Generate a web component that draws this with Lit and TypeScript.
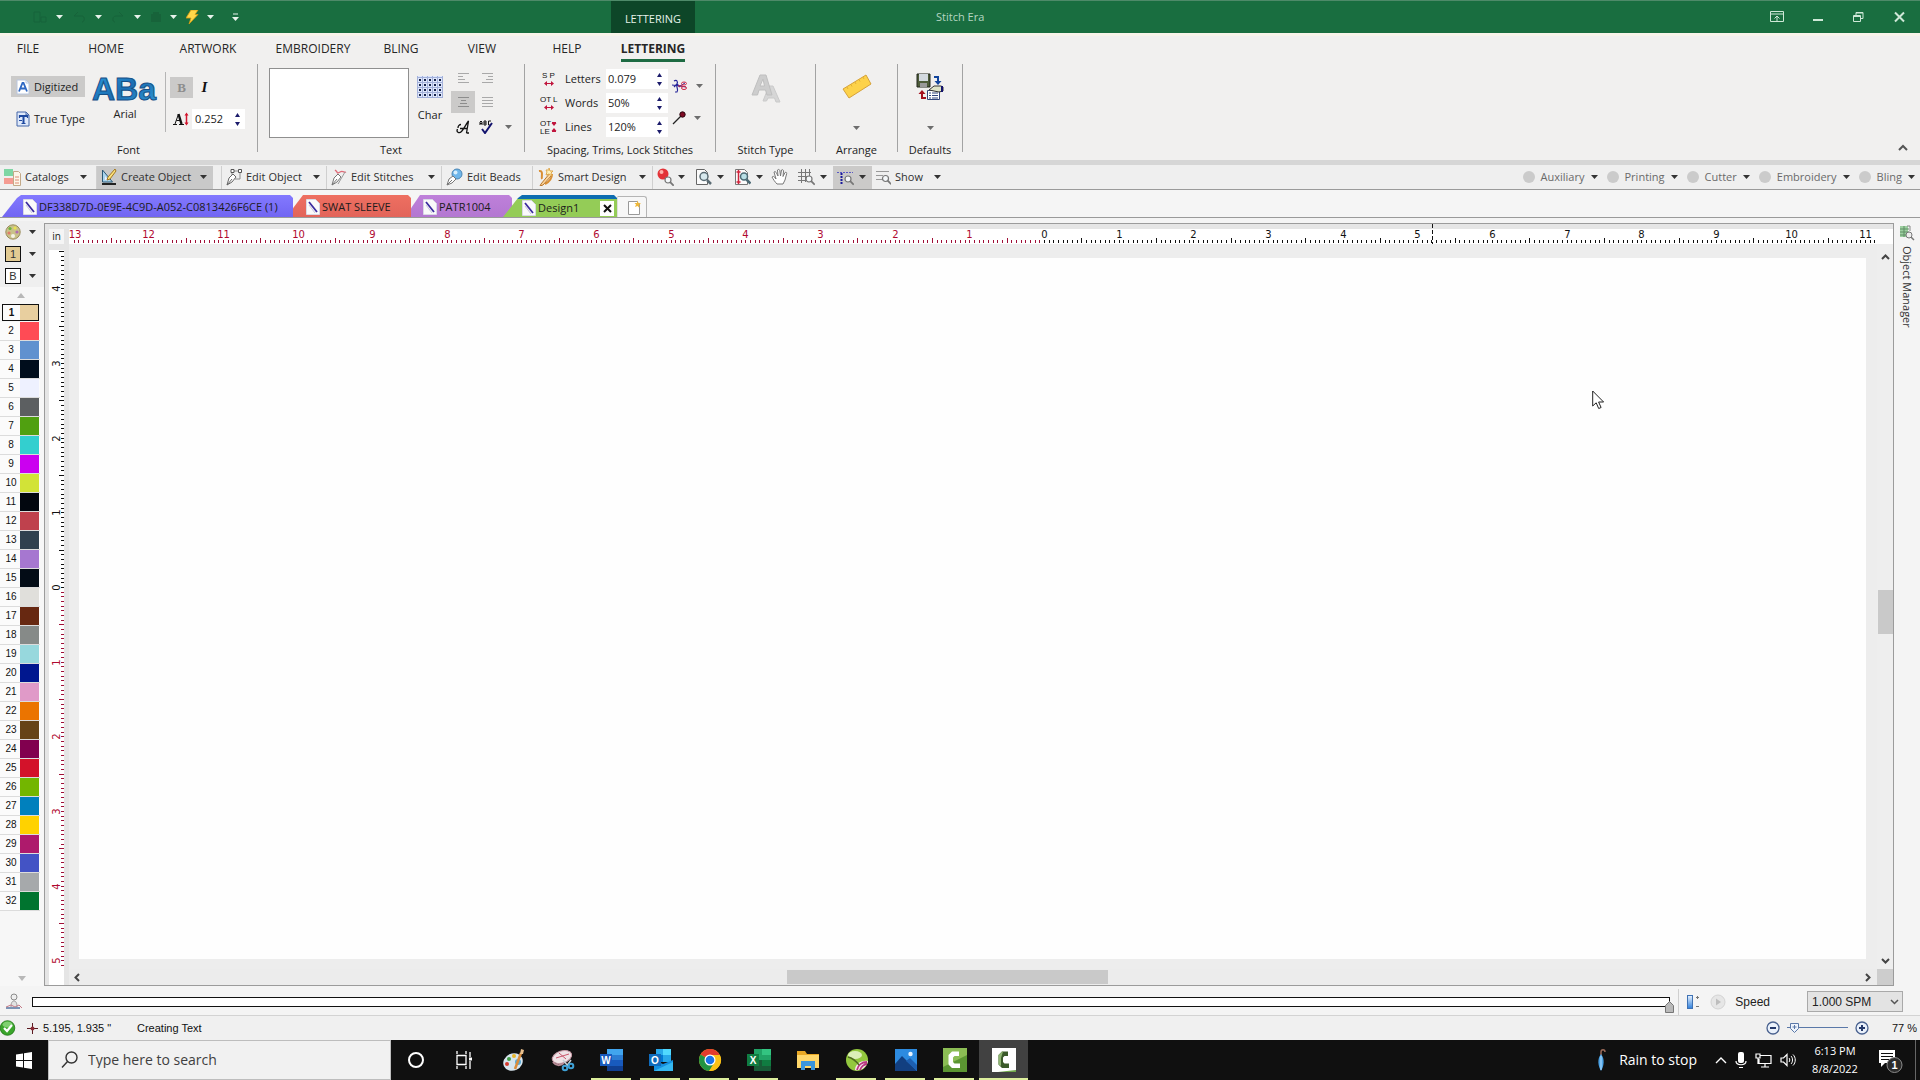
import { LitElement, html, svg, css, nothing } from "lit";
import { customElement } from "lit/decorators.js";
import { classMap } from "lit/directives/class-map.js";

const threads = [
  "#e8cf9f", "#ff4b55", "#6091cf", "#000d1c", "#eef1ff", "#5c5f61", "#50a010", "#33cfcf",
  "#cb00f0", "#d2e337", "#02070f", "#bf414d", "#2f404e", "#a677d0", "#030c16", "#e0dfdb",
  "#672811", "#868a88", "#97d8dd", "#00178f", "#e09ac8", "#eb7400", "#664316", "#81004f",
  "#d3122a", "#73b600", "#0080bd", "#ffd200", "#ae1a6c", "#4353c5", "#a6a9ab", "#00742f",
];

const ribbonTabs = ["File", "Home", "Artwork", "Embroidery", "Bling", "View", "Help", "Lettering"];

const INCH = 74.65;

const caret = (cls = "") => html`<svg class="caret ${cls}" width="7" height="4" viewBox="0 0 7 4" aria-hidden="true"><path d="M0 0h7L3.500 4z" fill="currentColor" /></svg>`;

const icon = (w: number, h: number, body: unknown) =>
  html`<svg class="icon" width=${w} height=${h} viewBox="0 0 ${w} ${h}" fill="none" aria-hidden="true">${body}</svg>`;

const lens = (x: number, y: number, c = "#777") =>
  svg`<circle cx=${x} cy=${y} r="3" stroke=${c} stroke-width="1.2" fill="#f5f8fa"/><path d="M${x + 2.2} ${y + 2.2}l3.500 3.500" stroke=${c} stroke-width="1.8"/>`;

const icons = {
  digitized: icon(14, 16, svg`<path d="M1 1h9l3 3v11H1z" fill="#fff" stroke="#b9c6de"/><path d="M10 1v3h3" stroke="#b9c6de"/><path d="M3 12.500L6.500 4h1L11 12.500M4.500 9.500h5" stroke="#2d67c4" stroke-width="1.800"/>`),
  trueType: icon(14, 16, svg`<path d="M1 1h9l3 3v11H1z" fill="#dfe9fa" stroke="#4467a8"/><path d="M10 1v3h3" stroke="#4467a8"/><path d="M4 5h7M7.500 5v7" stroke="#1f4aa0" stroke-width="2"/><path d="M3.500 4v3M11.500 4v3M5.500 12.500h4M3 9.500h3" stroke="#1f4aa0" stroke-width="1.200"/>`),
  height: icon(16, 14, svg`<path d="M0 12.500h4M6 12.500h5" stroke="#111" stroke-width="1.200"/><path d="M2 12L5.500 2M3.500 8.500h4" stroke="#111"/><path d="M5.500 2l3 10" stroke="#111" stroke-width="2.400"/><path d="M13.500 2v10" stroke="#d2142d" stroke-width="1.500"/><path d="M11.500 3.500l2-3 2 3zM11.500 10.500l2 3 2-3z" fill="#d2142d"/>`),
  grid: icon(26, 22, svg`<rect width="26" height="22" fill="#dfe7fb"/><path d="M0 1.500h26M0 6.500h26M0 11.500h26M0 16.500h26M0 21.500h26M.5 0v22M5.500 0v22M10.500 0v22M15.500 0v22M20.500 0v22M25.500 0v22" stroke="#a3b1da"/><path d="M2 4h2M7 4h2M12 4h2M17 4h2M22 4h2M2 9h2M7 9h2M12 9h2M17 9h2M22 9h2M2 14h2M7 14h2M12 14h2M17 14h2M22 14h2M2 19h2M7 19h2M12 19h2M17 19h2M22 19h2" stroke="#17234a" stroke-width="2"/>`),
  left: icon(13, 12, svg`<path d="M1 1.500h11M1 4.500h5M1 7.500h7M1 10.500h11" stroke="#a9a9a9"/>`),
  right: icon(13, 12, svg`<path d="M1 1.500h11M7 4.500h5M5 7.500h7M1 10.500h11" stroke="#a9a9a9"/>`),
  center: icon(13, 12, svg`<path d="M1 1.500h11M4 4.500h5M3 7.500h7M1 10.500h11" stroke="#8d8d8d"/>`),
  justify: icon(13, 12, svg`<path d="M1 1.500h11M1 4.500h11M1 7.500h11M1 10.500h11" stroke="#a9a9a9"/>`),
  script: icon(14, 14, svg`<path d="M1.500 9c-1.500 3 1.500 5 4 2.500C8 9 9.500 5 12.500 1L10.500 13M4 8.500h7M2 8c0-2 1.500-3.500 3-3.500M10.500 13h2.500" stroke="#111" stroke-width="1.300"/>`),
  spell: icon(16, 14, svg`<path d="M1 5V2l1-1 1 1v3M1 3.500h2M5 5V1h2v4H5M5 3h2M12 1H9.500v4H12" stroke="#111"/><path d="M3 9l3 4L13 3" stroke="#14146e" stroke-width="2"/>`),
  scissors: icon(16, 14, svg`<path d="M2 2c3-2 4 1 3 3L2 8M5 6c-1 3 2 4 0 7l-2 0M5 5l3 3" stroke="#26269a" stroke-width="1.200"/><path d="M0 6l8 1 5-3M8 7l6 1" stroke="#26269a"/><ellipse cx="12" cy="4.500" rx="2.500" ry="1.500" stroke="#cf2445"/><ellipse cx="12" cy="9" rx="2.500" ry="1.500" stroke="#cf2445"/><path d="M6 7h5" stroke="#cf2445"/>`),
  pin: icon(14, 14, svg`<path d="M1 13L9 5" stroke="#222" stroke-width="1.200"/><circle cx="10.500" cy="3.500" r="2.700" fill="#7e0a22" stroke="#2b0610"/>`),
  stitchType: icon(30, 30, svg`<path d="M12 28l6-15h4l7 16h-4l-1.500-4H17l-1.500 3z" fill="#d6d6d6" stroke="#cacaca"/><path d="M1 22L9 2h6l6 20h-5l-1.500-5H8l-1.500 5zM9 13h4.500L12 6z" fill="#cdcdcd" stroke="#bfbfbf"/>`),
  arrange: icon(32, 28, svg`<path d="M2 16L25 2l5 9L8 25z" fill="#fdd24a" stroke="#d6a23a"/><path d="M6 14l1 2M10 11.500l1 2M14 9l1 2M18 6.500l1 2M22 4l1 2" stroke="#e3b037"/>`),
  defaults: icon(28, 28, svg`<path d="M1 1h13v13H1z" fill="#4e5c3a" stroke="#23271c"/><path d="M3 1h9v7H3z" fill="#d3d9df"/><path d="M4 10h7v4H4z" fill="#999"/><path d="M18 4h4v5" stroke="#12459c" stroke-width="2"/><path d="M18.500 8h7L22 12z" fill="#12459c"/><path d="M10 25H6v-5" stroke="#a5101f" stroke-width="2"/><path d="M2.500 21h7L6 17z" fill="#a5101f"/><path d="M11.500 17.500h12v9h-12z" fill="#fff" stroke="#32467b"/><path d="M13 20h2M16 20h6M13 22.500h2M16 22.500h6M13 25h2M16 25h6" stroke="#32467b"/><path d="M13 17l5-4h7l2 1v4l-4 1z" fill="#dfe4c8" stroke="#333"/><path d="M26 13v6" stroke="#14146e" stroke-width="2"/>`),
  catalogs: icon(17, 18, svg`<path d="M0 1h9v7H0z" fill="#7fd6a4"/><path d="M0 10h9v6H0z" fill="#f49b92"/><path d="M9.500 3.500h5l2 2v12h-7z" fill="#fdf6ea" stroke="#c3a988"/><path d="M11 9h4M11 12h4M11 15h4" stroke="#dc8c74"/>`),
  create: icon(16, 18, svg`<path d="M1 16h14" stroke="#222" stroke-width="2"/><path d="M1.500 2v12h10z" fill="#a9d3ec" stroke="#2b5876"/><path d="M4 8v4h3z" fill="#eef"/><path d="M14 1L7 9l-1 3 3-1 6-8z" fill="#fbe27c" stroke="#a2761d"/>`),
  editObject: icon(16, 18, svg`<path d="M6 3h8v8h-5M6 3v5" stroke="#8d8d8d"/><path d="M5 1.500h3v3H5zM12.500 1.500h3v3h-3z" fill="#fff" stroke="#555"/><path d="M1 17l2-7 4-4 3 3-4 5z" fill="#fff" stroke="#666"/><path d="M1 17l5-6" stroke="#666"/>`),
  editStitches: icon(16, 18, svg`<path d="M4 2c4 3 1 4 5 2 3-2 4 1 6 0" stroke="#de6b78" stroke-width="1.300"/><path d="M1 17l2-7 4-4 3 3-4 5z" fill="#fff" stroke="#777"/><path d="M1 17l5-6" stroke="#777"/><path d="M14 4L7 16" stroke="#999"/>`),
  beads: icon(17, 18, svg`<circle cx="11" cy="6" r="5" fill="#6fb6ea" stroke="#4985b4"/><circle cx="9.500" cy="4.500" r="2" fill="#d7eefc"/><path d="M1 17l2-6 4-3 3 3-4 4z" fill="#fff" stroke="#777"/><path d="M1 17l5-5" stroke="#777"/>`),
  smart: icon(17, 18, svg`<path d="M2 3c5-1 2 6 3 8M15 6c0 4-3 8-7 10" stroke="#d98f35" stroke-width="2"/><path d="M4 16L13 5l2 2L6 17l-3 1z" fill="#fbd59a" stroke="#b9762d"/><path d="M12 0l1 3 3 0-2 2 1 3-3-2-3 1 1-3-1-2h3z" fill="#fff0b8" stroke="#e0a84c"/>`),
  ball: icon(17, 18, svg`<circle cx="6" cy="6" r="5.500" fill="#e33338"/><circle cx="4.500" cy="4" r="2" fill="#ffb1ab"/>${lens(11, 12)}`),
  docLens: icon(17, 18, svg`<path d="M1.500 1.500h8l3 3v12h-11z" fill="#fbfbfb" stroke="#666"/><circle cx="9" cy="8.500" r="4" fill="#d7e9ee" stroke="#5a6b73" stroke-width="1.500"/><path d="M12 12l4 4" stroke="#5a6b73" stroke-width="2.500"/>`),
  docRed: icon(17, 18, svg`<path d="M1.500 1.500h9l3 3v12h-12z" fill="#fbfbfb" stroke="#777"/><path d="M4.500 2v14M2.500 4h4M2.500 14h4" stroke="#d0243c" stroke-width="1.500"/><circle cx="10" cy="8.500" r="3.500" fill="#b9dfe6" stroke="#4c6a75" stroke-width="1.500"/><path d="M12.500 11.500l4 4" stroke="#4c6a75" stroke-width="2.500"/>`),
  hand: icon(18, 18, svg`<path d="M6 16c-2-2-4-5-5-7 1-1 2-1 4 2L3 4c1-1 2 0 2.500 1L7 8 6.500 2c1-1 2-.5 2.300.5L9.500 8l1-6c1-.8 2 0 2 1L12 8.500l2-4c1-.5 2 0 1.700 1L14 12l-2 4z" fill="#fff" stroke="#777"/>`),
  gridLens: icon(17, 18, svg`<path d="M0 4.500h13M0 8.500h11M0 12.500h8M3.500 1v14M7.500 1v13M11.500 1v8" stroke="#777"/>${lens(11, 11)}`),
  guide: icon(17, 18, svg`<path d="M0 4.500h16" stroke="#5a5ac4" stroke-dasharray="2 1"/><path d="M4.500 5v12" stroke="#1b1b9c" stroke-width="2" stroke-dasharray="2 1"/>${lens(11, 11)}`),
  show: icon(15, 18, svg`<path d="M0 3.500h13M0 7.500h7M0 11.500h6" stroke="#999"/>${lens(9.5, 10.5)}`),
  pen: icon(14, 16, svg`<path d="M.5.5h9l4 4v11H.5z" fill="#fafafa" stroke="#d9d9e5"/><path d="M3 3l8 10" stroke="#3a2a9e" stroke-width="1.800"/><path d="M3 6l6 8" stroke="#c8c5de"/>`),
  newTab: icon(14, 15, svg`<path d="M.5 1.500h9v2h2v11H.5z" fill="#fff" stroke="#999"/><path d="M9.500.5l1 2.500 2.500.5-2 1.500.5 3-2-2-2.500 1L8 4.500 6.500 3H9z" fill="#f0b93a"/>`),
  palette: icon(16, 16, svg`<circle cx="8" cy="8" r="7.200" fill="#c9c28a" stroke="#9a8b5c"/><circle cx="5" cy="4.500" r="1.600" fill="#6cb33e"/><circle cx="10" cy="4" r="1.600" fill="#e9e04f"/><circle cx="12" cy="8" r="1.600" fill="#b06bb2"/><circle cx="4" cy="9" r="1.600" fill="#e07b6a"/><circle cx="8" cy="12" r="2" fill="#f5f3e6"/>`),
  manager: icon(16, 16, svg`<path d="M1 1h8v11H1z" fill="#9dcfa0"/><path d="M1 4h9M1 7h9M1 10h7M5 1v11" stroke="#5f8f64"/><path d="M8 1h3v5" stroke="#888"/><circle cx="10" cy="10" r="3" stroke="#777" fill="#eee"/><path d="M12 12l3 3" stroke="#777" stroke-width="1.500"/>`),
  bolt: icon(13, 14, svg`<path d="M5 0h7L9 4.500h3L3 14l2-6H0z" fill="#ffd84a" stroke="#d89a12" stroke-width=".8"/>`),
  sim: icon(17, 17, svg`<circle cx="9" cy="4" r="3" fill="#eee" stroke="#8b8b8b"/><path d="M6 14c0-4 1-6 3-6s3 2 3 6" fill="#e3e3e3" stroke="#999"/><path d="M1 15h14" stroke="#7b93b5" stroke-width="2"/><path d="M1 14l5-2 4 2 4-2 3 3" stroke="#c47a86"/>`),
};

const taskIcons: { name: string; art: unknown; open?: boolean; active?: boolean }[] = [
  { name: "Cortana", art: svg`<circle cx="12" cy="12" r="7" stroke="#fff" stroke-width="2"/>` },
  { name: "Task View", art: svg`<path d="M4 7.500h9v9H4zM4 3v3M13 3v3M4 18v3M13 18v3" stroke="#fff" stroke-width="1.300"/><path d="M17 4v5M17 13v8" stroke="#fff" stroke-width="1.300"/><path d="M16 9.500h3v3h-3z" fill="#fff"/>` },
  { name: "Paint", art: svg`<ellipse cx="11" cy="14" rx="10" ry="8.500" transform="rotate(-25 11 14)" fill="#d7e5ee"/><circle cx="5" cy="16" r="2" fill="#d43b2f"/><circle cx="7" cy="11" r="2" fill="#3f9b45"/><circle cx="12" cy="8" r="2" fill="#e8b62c"/><circle cx="16" cy="14" r="3" fill="#58a9d7"/><path d="M13 21L19 5" stroke="#d98c3b" stroke-width="2.500"/><path d="M18 6l1-5 3 1-1 4z" fill="#e9c08d"/>` },
  { name: "Snipping Tool", art: svg`<ellipse cx="11" cy="9" rx="10" ry="6" transform="rotate(-18 11 9)" fill="#efe3e6" stroke="#c79aa6"/><path d="M5 10l13-4M8 5l7 6" stroke="#c9566b"/><path d="M2 14c3 4 7 4 11 1" stroke="#b98d98" stroke-width="2"/><path d="M12 12l5 6M20 12l-5 7" stroke="#c5cdd3" stroke-width="1.500"/><circle cx="14" cy="20" r="2.300" stroke="#3fa1d6" stroke-width="2"/><circle cx="20" cy="18" r="2.300" stroke="#3fa1d6" stroke-width="2"/>` },
  { name: "Word", open: true, art: svg`<path d="M7 1h16v22H7z" fill="#2b7cd3"/><path d="M7 1h16v6H7z" fill="#41a5ee"/><path d="M7 12h16v6H7z" fill="#185abd"/><path d="M7 18h16v5H7z" fill="#103f91"/><path d="M0 6h12v12H0z" fill="#185abd"/><text x="6" y="15.500" font-size="10" class="glyph">W</text>` },
  { name: "Outlook", open: true, art: svg`<path d="M7 1h15v13H7z" fill="#28a8ea"/><path d="M14 1h8v6h-8z" fill="#50d9ff"/><path d="M7 7h7v7H7z" fill="#0078d4"/><path d="M5 12l9 4 10-4v11H5z" fill="#1490df"/><path d="M5 23l19-9v9z" fill="#35b8f1"/><path d="M0 6h12v12H0z" fill="#0f6cbd"/><text x="6" y="15.500" font-size="10" class="glyph">O</text>` },
  { name: "Chrome", open: true, art: svg`<circle cx="12" cy="12" r="11" fill="#fbc116"/><path d="M12 12L2.500 6.500A11 11 0 0 1 21.500 6.500z" fill="#e33b2e"/><path d="M12 12L2.500 6.500A11 11 0 0 0 11 23l6-8z" fill="#229342"/><path d="M12 7h9.800a11 11 0 0 1-10.500 16L17 13z" fill="#fbc116"/><circle cx="12" cy="12" r="5.500" fill="#fff"/><circle cx="12" cy="12" r="4.300" fill="#1a73e8"/>` },
  { name: "Excel", open: true, art: svg`<path d="M7 1h17v22H7z" fill="#21a366"/><path d="M15 1h9v6h-9z" fill="#33c481"/><path d="M7 12h8v11H7z" fill="#185c37"/><path d="M15 12h9v6h-9z" fill="#107c41"/><path d="M15 18h9v5h-9z" fill="#185c37"/><path d="M0 6h12v12H0z" fill="#107c41"/><text x="6" y="15.500" font-size="10" class="glyph">X</text>` },
  { name: "File Explorer", art: svg`<path d="M1 3h8l2 3h12v14H1z" fill="#e9a825"/><path d="M1 7h22v13H1z" fill="#ffd76a"/><path d="M5 13h14v9h-4v-4H9v4H5z" fill="#3a96dd"/>` },
  { name: "Stitch Era", open: true, art: svg`<circle cx="12" cy="12" r="11" fill="#93c83e"/><ellipse cx="10" cy="7" rx="7" ry="4" fill="#dcefb8"/><path d="M23 13a11 11 0 0 1-13 9c0-6 6-10 13-9z" fill="#f8e3ee"/><path d="M12 22c1-5 5-8 10-8M15 22c1-3 4-6 7-6" stroke="#b8367e" stroke-width="1.800"/><path d="M3 9c4 1 8 4 11 8" stroke="#4f6b1f" stroke-width="1.500"/>` },
  { name: "Photos", open: true, art: svg`<path d="M1 1h22v22H1z" fill="#2d8be0"/><path d="M1 23V16l7-8 15 15z" fill="#123f80"/><path d="M12 13l4-3 7 7v6z" fill="#1d5fb0"/><circle cx="16.500" cy="6" r="2.200" fill="#e8f4ff"/>` },
  { name: "Camtasia", open: true, art: svg`<path d="M0 0h24v24H0z" fill="#5b9632"/><path d="M0 0h24v7L0 19z" fill="#8bbd54"/><path d="M16 3.500H9L5.500 7v9.500L9 20h8v-4.500h-5.500L10 14V9.500L11.500 8H16z" fill="#fff"/>` },
  { name: "Camtasia Recorder", active: true, art: svg`<path d="M0 0h24v24H0z" fill="#fff"/><path d="M24 22v2H6z" fill="#6ea64a"/><path d="M16 3.500H10L6.500 7v9.500L10 20h7v-4.500h-4.500L11 14V9.500L12.500 8H16z" fill="#3b5a2a"/><path d="M6.500 7L10 3.500h1L9 10v8l-2.500-1.500z" fill="#8fb573"/>` },
];

@customElement("design-ruler")
export class DesignRuler extends LitElement {
  static properties = { vertical: { type: Boolean } };
  declare vertical: boolean;

  static styles = css`
    :host { display: block; overflow: hidden; background: #fff; }
    svg { display: block; width: 100%; height: 100%; overflow: hidden; }
    text { font: 10px "DejaVu Sans", "Open Sans", sans-serif; text-anchor: middle; fill: #111; }
    text.neg { fill: #b0092f; }
    .pos { stroke: #111; }
    .neg-line { stroke: #a01038; }
  `;

  render() {
    const origin = this.vertical ? 337.5 : 975.5;
    const from = this.vertical ? -79 : -208;
    const to = this.vertical ? 81 : 178;
    let pos = "";
    let neg = "";
    const labels = [];
    for (let i = from; i <= to; i++) {
      const p = Math.floor(origin + (i * INCH) / 16) + 0.5;
      const len = i % 8 === 0 && i % 16 !== 0 ? 5 : 3;
      const seg = this.vertical ? `M${15 - len} ${p}h${len}` : `M${p} ${14 - len}v${len}`;
      const negative = this.vertical ? i > 0 : i < 0;
      if (negative) neg += seg; else pos += seg;
      if (i % 16 === 0) {
        const cls = negative ? "neg" : "";
        const n = Math.abs(i / 16);
        labels.push(this.vertical
          ? svg`<text class=${cls} transform="translate(11 ${p}) rotate(-90)">${n}</text>`
          : svg`<text class=${cls} x=${Math.max(p, 6)} y="9">${n}</text>`);
      }
    }
    return html`<svg aria-hidden="true"><path class="pos" d=${pos} /><path class="neg-line" d=${neg} />${labels}</svg>`;
  }
}

@customElement("app-root")
export class AppRoot extends LitElement {
  static styles = css`
    * { box-sizing: border-box; }
    :host {
      display: flex; flex-direction: column; min-height: 100vh;
      font: 11px/16px "Open Sans", "Noto Sans", sans-serif; color: #222; background: #f3f3f3;
    }
    button, input, select { font: inherit; color: inherit; border: 0; background: none; padding: 0; margin: 0; border-radius: 0; }
    button { display: flex; align-items: center; }
    svg { display: block; flex: none; }
    .spring { flex: 1; }

    .titlebar { display: grid; grid-template-columns: 611px 84px 1fr 164px; height: 33px; background: #196e40; border-top: 1px solid #4e8a69; color: #cfe3d7; }
    .quick { display: flex; align-items: center; padding: 0 0 0 33px; gap: 9px; }
    .quick .caret { color: #e8f3ec; }
    .quick .dim { color: #17633a; }
    .quick button { gap: 8px; }
    .quick .customize { margin-left: 9px; }
    .context { display: flex; align-items: center; justify-content: center; background: #0d4628; color: #e6f2ea; padding-top: 3px; }
    .apptitle { padding: 8px 0 0 241px; color: #b5d6c2; }
    .winbtns { display: grid; grid-template-columns: repeat(4, 1fr); color: #cfe8d8; }
    .winbtns button { justify-content: center; }

    .menu { display: flex; height: 31px; padding: 5px 0 0 1px; background: #f1f0ef; border-top: 3px solid #f8f4ea; }
    .menu button { justify-content: center; align-items: flex-start; font-size: 12px; color: #262626; }
    .menu span { display: block; height: 21px; }
    .m-file { width: 54px; } .m-home, .m-artwork { width: 102px; } .m-embroidery { width: 108px; }
    .m-bling { width: 68px; } .m-view { width: 94px; } .m-help { width: 76px; } .m-lettering { width: 96px; }
    .menu .m-lettering span { font-weight: 700; border-bottom: 3px solid #1e6b43; }

    .ribbon { display: flex; height: 96px; padding: 0 0 8px; background: #f1f0ef; position: relative; }
    .group { display: flex; flex-direction: column; border-right: 1px solid #a3a3a3; }
    .group > .body { flex: 1; min-height: 0; display: flex; align-items: flex-start; }
    .group > .caption { height: 16px; margin-bottom: -6px; text-align: center; white-space: nowrap; }
    .g-font { width: 258px; } .g-text { width: 267px; } .g-space { width: 191px; }
    .g-stitch { width: 100px; } .g-arrange { width: 82px; } .g-defaults { width: 65px; }
    .fontkinds { padding: 12px 0 0 11px; display: flex; flex-direction: column; gap: 11px; width: 85px; }
    .fontkinds button { height: 21px; padding: 0 4px 0 5px; gap: 4px; white-space: nowrap; }
    .on { background: #cbcac9; }
    .fontface { flex-direction: column; width: 80px; padding-top: 5px; }
    .aba { font: 700 32px "Liberation Sans", sans-serif; fill: url(#abafill); stroke: #174f86; }
    .face-name { margin-top: -3px; }
    .fontstyle { margin-top: 8px; height: 60px; padding: 5px 0 0 4px; border-left: 1px solid #b5b5b5; display: flex; flex-direction: column; gap: 11px; }
    .fontstyle > div { display: flex; }
    .stylebtn { width: 23px; height: 21px; justify-content: center; font: 700 13px "Liberation Serif", serif; color: #8d8d8d; }
    .stylebtn.ital { font-style: italic; font-size: 15px; color: #111; }
    .sizefield { align-items: center; gap: 3px; padding-left: 3px; }
    .spin { display: flex; align-items: center; background: #fff; height: 20px; }
    .spin input { width: 42px; padding-left: 3px; }
    .spin.wide input { width: 50px; padding-left: 2px; }
    .spin .arrows { display: flex; flex-direction: column; gap: 5px; width: 11px; }
    .arrows button { color: #1b1b6b; }
    .textarea { margin: 4px 0 0 11px; width: 140px; height: 70px; border: 1px solid #8f8f8f; background: #fff; resize: none; padding: 2px; font: inherit; border-radius: 0; }
    .charbtn { flex-direction: column; width: 42px; padding-top: 12px; gap: 9px; }
    .aligns { display: grid; grid-template-columns: 24px 24px 18px; grid-template-rows: 27px 22px 27px; }
    .aligns button { justify-content: center; }
    .gray { color: #6d6d6d; }
    .spacing { display: grid; grid-template-columns: 27px 41px 62px; grid-auto-rows: 20px; row-gap: 4px; align-items: center; padding: 5px 0 0 13px; }
    .spacing .glyphs { font: 8px "Liberation Sans", sans-serif; fill: #111; }
    .lock { display: flex; flex-direction: column; gap: 18px; padding: 15px 0 0 4px; }
    .lock button { gap: 8px; }
    .big { width: 100%; flex-direction: column; padding-top: 9px; gap: 25px; }
    .collapse { position: absolute; right: 12px; bottom: 8px; }

    .tools { display: flex; align-items: center; height: 30px; border-top: 5px solid #d6d6d6; border-bottom: 1px solid #9a9a9a; background: #efefef; color: #303030; }
    .tools button { height: 23px; padding: 0 6px 0 4px; gap: 4px; white-space: nowrap; }
    .tools .caret { color: #333; }
    .tools .push { margin-left: auto; }
    .tools .lbl { display: block; text-align: left; }
    .tools .sepr { border-left: 1px solid #cfcfcf; }
    .t-cat { width: 93px; } .t-create { width: 117px; margin: 0 8px 0 3px; } .t-obj { width: 105px; } .t-st { width: 115px; }
    .t-bead { width: 91px; } .t-smart { width: 120px; } .t-ico { width: 39px; } .tools .t-hand { width: 25px; padding: 0 2px; }
    .t-show { width: 75px; }
    .tools .t-create.on { background: #c9c9c9; }
    .tools .mach { color: #6a6a6a; gap: 6px; padding: 0 5px 0 4px; }
    .dot { width: 12px; height: 12px; border-radius: 6px; background: #cbcbcb; }

    .tabs { display: flex; align-items: flex-end; height: 28px; padding-left: 2px; background: #f5f5f5; border-bottom: 1px solid #9a9a9a; color: #1c1c1c; }
    .tab { height: 22px; padding-top: 2px; display: flex; align-items: center; white-space: nowrap; clip-path: polygon(0 100%, 15px 3px, 19px 0, calc(100% - 3px) 0, 100% 3px, 100% 100%); }
    .tab button { gap: 2px; }
    .t1 { width: 291px; padding-left: 21px; background: linear-gradient(#8379ff, #7165f2); }
    .t2 { width: 118px; padding-left: 13px; background: linear-gradient(#ee6f61, #e2645a); clip-path: polygon(0 60%, 10px 0, calc(100% - 3px) 0, 100% 3px, 100% 100%, 0 100%); }
    .t3 { width: 101px; padding-left: 12px; background: linear-gradient(#be80da, #b377d1); clip-path: polygon(0 60%, 9px 0, calc(100% - 3px) 0, 100% 3px, 100% 100%, 0 100%); }
    .t4 { width: 114px; padding: 4px 3px 0 19px; margin-left: -9px; background: linear-gradient(#0d6cb0 4px, #94cc57 4px); justify-content: space-between; }
    .closex { width: 14px; height: 15px; background: #fff; justify-content: center; }
    .tnew { width: 30px; height: 21px; padding-left: 5px; justify-content: center; border: 1px solid #b5b5b5; border-bottom: 0; border-left-color: #ddd; background: #f7f7f7; border-radius: 0 3px 0 0; }

    .main { flex: 1; display: grid; grid-template-columns: 44px minmax(0, 1fr) 26px; padding-top: 5px; background: #f4f4f4; }
    .side { margin-top: -2px; background: #f7f7f7; display: flex; flex-direction: column; font-family: "Liberation Sans", sans-serif; }
    .side .row { display: flex; align-items: center; height: 22px; padding-left: 5px; gap: 8px; color: #333; background: #efefef; }
    .sq { width: 16px; height: 16px; border: 1px solid #111; background: #fff; line-height: 14px; font-size: 11px; text-align: center; }
    .sq.tan { background: #e2cb93; }
    .up { display: flex; align-items: center; justify-content: center; height: 16px; padding-right: 3px; color: #b8b8b8; }
    .threads { list-style: none; margin: 0; padding: 0; width: 40px; }
    .threads button { width: 100%; height: 19px; padding: 0 1px 0 0; border-bottom: 1px solid #dcdcdc; background: #fbfbfb; font-size: 10px; color: #111; }
    .threads .num { width: 20px; padding-left: 2px; text-align: center; }
    .threads i { flex: 1; height: 18px; }
    .threads .sel { border: 1px solid #111; height: 17px; margin: 1px 0; width: 37px; margin-left: 2px; font-weight: 700; padding: 0; }
    .threads .sel .num { width: 17px; padding: 0; } .threads .sel i { height: 15px; }
    .down { margin-top: auto; padding: 0; }

    .frame { position: relative; display: grid; grid-template-columns: 4px 15px 5px minmax(0, 1fr) 16px; grid-template-rows: 5px 15px 6px minmax(0, 1fr) 16px; background: #e5e5e5; border: 1px solid #9b9b9b; }
    .corner { grid-area: 2 / 2; background: #f5f5f5; text-align: center; font: 10px/15px "Open Sans", sans-serif; }
    .hr { grid-area: 2 / 4 / 3 / 6; }
    .vr { grid-area: 4 / 2 / 6 / 3; }
    .work { grid-area: 3 / 4 / 5 / 5; background: #ededed; padding: 14px 11px 10px 10px; display: flex; }
    .paper { flex: 1; background: #fefefe; }
    .marker { position: absolute; left: 1387px; top: 0; width: 1px; height: 20px; background: repeating-linear-gradient(#111 0 4px, transparent 4px 6px); }
    .pointer { position: absolute; left: 1547px; top: 166px; }
    .vs { grid-area: 3 / 5 / 5 / 6; display: flex; flex-direction: column; align-items: center; background: #eeeeee; padding: 10px 0 5px; color: #444; }
    .hs { grid-area: 5 / 4 / 6 / 5; display: flex; align-items: center; background: #ececec; padding: 0 6px 0 5px; color: #444; }
    .thumb { background: #c9c9c9; }
    .vs .before { flex: 330; } .vs .thumb { flex: 44; width: 15px; } .vs .after { flex: 324; }
    .hs .before { flex: 705; } .hs .thumb { flex: 321; height: 14px; } .hs .after { flex: 755; }
    .grip { grid-area: 5 / 5; background: #cdcdcd; }
    .manager { display: flex; flex-direction: column; align-items: center; padding-top: 2px; gap: 5px; color: #333; }
    .manager span { writing-mode: vertical-rl; }

    .simbar { display: flex; align-items: center; height: 30px; padding: 2px 17px 0 5px; background: #f4f4f4; border-bottom: 1px solid #d3d3d3; font: 12px/16px "Liberation Sans", sans-serif; }
    .progress { flex: 1; display: flex; align-items: center; margin: 0 8px 0 10px; position: relative; }
    .progress .bar { flex: 1; height: 10px; border: 1px solid #111; background: #fff; }
    .progress .handle { position: absolute; right: -4px; top: 4px; }
    .simbar .ctl { display: flex; align-items: center; gap: 9px; border-left: 1px solid #cfcfcf; height: 26px; padding-left: 8px; }
    .speed { width: 96px; height: 21px; padding: 0 4px; background: #e3e3e3; border: 1px solid #a9a9a9; appearance: none; }
    .selwrap { position: relative; margin-left: 28px; display: flex; }
    .selwrap svg { position: absolute; right: 4px; top: 8px; pointer-events: none; }

    .status { display: flex; align-items: center; height: 24px; padding: 0 3px 0 0; background: #f0f0f0; font: 11px/16px "Liberation Sans", sans-serif; color: #111; }
    .status .coords { margin-left: 5px; width: 94px; }
    .status .cross { margin-left: 11px; }
    .zoom { display: flex; align-items: center; gap: 7px; margin-right: 23px; }
    .track { width: 61px; height: 12px; display: flex; }

    .taskbar { display: flex; align-items: stretch; height: 40px; background: #101010; color: #fff; }
    .taskbar .start { width: 48px; justify-content: center; }
    .search { display: flex; align-items: center; gap: 10px; width: 343px; padding-left: 12px; background: #f1f1f1; border: 1px solid #bdbdbd; }
    .search input { font-size: 14px; flex: 1; color: #333; outline: 0; }
    .search input::placeholder { color: #3f3f3f; opacity: 1; }
    .apps { display: flex; }
    .apps button { width: 49px; justify-content: center; position: relative; }
    .apps .open::after, .apps .active::after { content: ""; position: absolute; bottom: 0; left: 4px; right: 5px; height: 2px; background: #dcee9c; }
    .apps .active { background: #414141; }
    .apps .active::after { left: 0; right: 0; }
    .glyph { font-family: "Liberation Sans", sans-serif; font-weight: 700; fill: #fff; text-anchor: middle; }
    .tray { display: flex; align-items: center; margin-left: auto; gap: 8px; padding-right: 4px; }
    .weather { gap: 13px; margin-right: 10px; font-size: 14px; }
    .clock { width: 62px; flex-direction: column; line-height: 18px; justify-content: center; }
    .notes { margin: 0 3px 0 4px; }
    .edge { width: 1px; height: 40px; background: #666; }
  `;

  private tool(cls: string, art: unknown, label = "", drop = true) {
    return html`<button class=${cls} aria-label=${label || "View tool"}>${art}${label ? html`<span class="lbl">${label}</span>` : nothing}${drop ? html`<span class="push">${caret()}</span>` : nothing}</button>`;
  }

  private spin(id: string, value: string, wide = false) {
    return html`<div class=${classMap({ spin: true, wide })}>
      <input id=${id} .value=${value} aria-label=${id} />
      <div class="arrows">
        <button aria-label="Increase"><svg width="7" height="4" viewBox="0 0 7 4"><path d="M1 4h5L3.500 0z" fill="currentColor" /></svg></button>
        <button aria-label="Decrease"><svg width="7" height="4" viewBox="0 0 7 4"><path d="M1 0h5L3.500 4z" fill="currentColor" /></svg></button>
      </div>
    </div>`;
  }

  private titleBar() {
    return html`<header class="titlebar">
      <div class="quick">
        <button aria-label="New"><span class="dim">${icon(15, 13, svg`<path d="M1 1h6v10H1zM8 6h5v5H8z" stroke="currentColor"/>`)}</span>${caret()}</button>
        <button aria-label="Undo"><span class="dim">${icon(15, 13, svg`<path d="M2 5l4-4M2 5h8c3 0 3 6 0 6" stroke="currentColor"/>`)}</span>${caret()}</button>
        <button aria-label="Redo"><span class="dim">${icon(15, 13, svg`<path d="M12 5L8 1M12 5H5C1 5 1 11 4 11" stroke="currentColor"/>`)}</span>${caret()}</button>
        <button aria-label="Paste"><span class="dim">${icon(12, 13, svg`<path d="M1 3h10v8H1zM3 1h6v3H3z" fill="currentColor"/>`)}</span>${caret()}</button>
        <button aria-label="Generate">${icons.bolt}${caret()}</button>
        <button class="customize" aria-label="Customize"><svg width="7" height="8" viewBox="0 0 7 8"><path d="M1 1h5" stroke="#e8f3ec" /><path d="M0 4h7L3.500 8z" fill="#e8f3ec" /></svg></button>
      </div>
      <div class="context">LETTERING</div>
      <div class="apptitle">Stitch Era</div>
      <div class="winbtns">
        <button aria-label="Ribbon options">${icon(14, 12, svg`<path d="M.5.5h13v10H.5zM.5 3h13" stroke="currentColor"/><path d="M7 10V5M4.500 7.500L7 5l2.500 2.500" stroke="currentColor"/>`)}</button>
        <button aria-label="Minimize">${icon(10, 12, svg`<path d="M0 9h10" stroke="currentColor" stroke-width="2"/>`)}</button>
        <button aria-label="Restore">${icon(11, 12, svg`<path d="M.5 4.500h7v6h-7zM.5 5.500h7M3 4V1.500h7v6H8M3 2h7" stroke="currentColor"/>`)}</button>
        <button aria-label="Close">${icon(11, 12, svg`<path d="M1 1.500l9 9M10 1.500l-9 9" stroke="currentColor" stroke-width="2"/>`)}</button>
      </div>
    </header>`;
  }

  private ribbon() {
    return html`<section class="ribbon">
      <div class="group g-font">
        <div class="body">
          <div class="fontkinds">
            <button class="on">${icons.digitized}Digitized</button>
            <button>${icons.trueType}True Type</button>
          </div>
          <button class="fontface" aria-label="Font Arial">
            <svg width="70" height="40" viewBox="0 0 70 40">
              <defs><linearGradient id="abafill" x1="0" y1="0" x2="1" y2="1"><stop offset="0" stop-color="#2b9fe0" /><stop offset=".5" stop-color="#1c6fb4" /><stop offset="1" stop-color="#2f9ad6" /></linearGradient></defs>
              <text class="aba" x="2" y="31">ABa</text>
            </svg>
            <span class="face-name">Arial</span>
          </button>
          <div class="fontstyle">
            <div><button class="stylebtn on">B</button><button class="stylebtn ital">I</button></div>
            <div class="sizefield">${icons.height}${this.spin("Height", "0.252")}</div>
          </div>
        </div>
        <div class="caption">Font</div>
      </div>
      <div class="group g-text">
        <div class="body">
          <textarea class="textarea" aria-label="Text"></textarea>
          <button class="charbtn">${icons.grid}Char</button>
          <div class="aligns">
            <button aria-label="Align left">${icons.left}</button><button aria-label="Align right">${icons.right}</button><span></span>
            <button class="on" aria-label="Center">${icons.center}</button><button aria-label="Justify">${icons.justify}</button><span></span>
            <button aria-label="Script">${icons.script}</button><button aria-label="Spelling">${icons.spell}</button><button class="gray" aria-label="More">${caret()}</button>
          </div>
        </div>
        <div class="caption">Text</div>
      </div>
      <div class="group g-space">
        <div class="body">
          <div class="spacing">
            <svg width="20" height="18" viewBox="0 0 20 18"><text class="glyphs" x="4" y="8">S P</text><path d="M7 13.500h8" stroke="#c0143c" /><path d="M9 11v5l-3-2.500zM13 11v5l3-2.500z" fill="#c0143c" /></svg>
            <label for="Letters">Letters</label>${this.spin("Letters", "0.079", true)}
            <svg width="20" height="18" viewBox="0 0 20 18"><text class="glyphs" x="2" y="8">OT</text><text class="glyphs" x="15" y="8">L</text><path d="M7 13.500h8" stroke="#c0143c" /><path d="M9 11v5l-3-2.500zM13 11v5l3-2.500z" fill="#c0143c" /></svg>
            <label for="Words">Words</label>${this.spin("Words", "50%", true)}
            <svg width="20" height="18" viewBox="0 0 20 18"><text class="glyphs" x="2" y="8">OT</text><text class="glyphs" x="2" y="16">LE</text><path d="M14 4.500h4M14 13.500h4" stroke="#c0143c" /><path d="M13.500 5h5L16 8zM13.500 13h5L16 10z" fill="#c0143c" /></svg>
            <label for="Lines">Lines</label>${this.spin("Lines", "120%", true)}
          </div>
          <div class="lock gray">
            <button aria-label="Trims">${icons.scissors}${caret()}</button>
            <button aria-label="Lock stitches">${icons.pin}${caret()}</button>
          </div>
        </div>
        <div class="caption">Spacing, Trims, Lock Stitches</div>
      </div>
      <div class="group g-stitch"><div class="body"><button class="big" aria-label="Stitch Type">${icons.stitchType}</button></div><div class="caption">Stitch Type</div></div>
      <div class="group g-arrange"><div class="body"><button class="big gray" aria-label="Arrange">${icons.arrange}${caret()}</button></div><div class="caption">Arrange</div></div>
      <div class="group g-defaults"><div class="body"><button class="big gray" aria-label="Defaults">${icons.defaults}${caret()}</button></div><div class="caption">Defaults</div></div>
      <button class="collapse" aria-label="Collapse ribbon">${icon(10, 8, svg`<path d="M1 6l4-4 4 4" stroke="#555" stroke-width="2"/>`)}</button>
    </section>`;
  }

  private toolbar() {
    return html`<nav class="tools" aria-label="Tools">
      ${this.tool("t-cat", icons.catalogs, "Catalogs")}
      ${this.tool("t-create on sepr", icons.create, "Create Object")}
      ${this.tool("t-obj sepr", icons.editObject, "Edit Object")}
      ${this.tool("t-st sepr", icons.editStitches, "Edit Stitches")}
      ${this.tool("t-bead sepr", icons.beads, "Edit Beads", false)}
      ${this.tool("t-smart sepr", icons.smart, "Smart Design")}
      ${this.tool("t-ico sepr", icons.ball)}
      ${this.tool("t-ico", icons.docLens)}
      ${this.tool("t-ico", icons.docRed)}
      ${this.tool("t-hand", icons.hand, "", false)}
      ${this.tool("t-ico", icons.gridLens)}
      ${this.tool("t-ico on", icons.guide)}
      ${this.tool("t-show", icons.show, "Show")}
      <span class="spring"></span>
      ${["Auxiliary", "Printing", "Cutter", "Embroidery", "Bling"].map((n) => this.tool("mach", html`<span class="dot"></span>`, n))}
    </nav>`;
  }

  private workspace() {
    return html`<main class="main">
      <aside class="side">
        <div class="row">${icons.palette}${caret()}</div>
        <div class="row"><span class="sq tan">1</span>${caret()}</div>
        <div class="row"><span class="sq">B</span>${caret()}</div>
        <button class="up" aria-label="Scroll up"><svg width="8" height="5" viewBox="0 0 8 5"><path d="M0 5h8L4 0z" fill="currentColor" /></svg></button>
        <ul class="threads">
          ${threads.map((c, i) => html`<li><button class=${classMap({ sel: i === 0 })}><span class="num">${i + 1}</span><i style="background:${c}"></i></button></li>`)}
        </ul>
        <button class="up down" aria-label="Scroll down"><svg width="8" height="5" viewBox="0 0 8 5"><path d="M0 0h8L4 5z" fill="currentColor" /></svg></button>
      </aside>
      <section class="frame" aria-label="Design area">
        <span class="corner">in</span>
        <design-ruler class="hr"></design-ruler>
        <design-ruler class="vr" vertical></design-ruler>
        <div class="work"><div class="paper"></div></div>
        <div class="vs">
          ${icon(9, 6, svg`<path d="M1 5l3.500-3.500L8 5" stroke="currentColor" stroke-width="2"/>`)}
          <span class="before"></span><span class="thumb"></span><span class="after"></span>
          ${icon(9, 6, svg`<path d="M1 1l3.500 3.500L8 1" stroke="currentColor" stroke-width="2"/>`)}
        </div>
        <div class="hs">
          ${icon(6, 9, svg`<path d="M5 1L1.500 4.500 5 8" stroke="currentColor" stroke-width="2"/>`)}
          <span class="before"></span><span class="thumb"></span><span class="after"></span>
          ${icon(6, 9, svg`<path d="M1 1l3.500 3.500L1 8" stroke="currentColor" stroke-width="2"/>`)}
        </div>
        <div class="grip"></div>
        <div class="marker"></div>
        <svg class="pointer" width="13" height="20" viewBox="0 0 13 20" aria-hidden="true"><path d="M.7 1v15l3.500-3.200 2.500 5.700 2.400-1-2.500-5.500h5z" fill="#fff" stroke="#222" /></svg>
      </section>
      <aside class="manager">${icons.manager}<span>Object Manager</span></aside>
    </main>`;
  }

  private bottom() {
    return html`<div class="simbar">
        ${icons.sim}
        <div class="progress"><div class="bar"></div><svg class="handle" width="9" height="12" viewBox="0 0 9 12"><path d="M.5 11.500v-7l4-4 4 4v7z" fill="#b9b9b9" stroke="#777" /></svg></div>
        <div class="ctl">
          ${icon(14, 16, svg`<defs><linearGradient id="cell" x2="0" y2="1"><stop stop-color="#e9f3ff"/><stop offset="1" stop-color="#2f80dc"/></linearGradient></defs><rect x=".5" y="1.500" width="5" height="13" fill="url(#cell)" stroke="#3f72b4"/><path d="M9 3.500h3M10.500 2v3M9 12.500h3" stroke="#777"/>`)}
          ${icon(16, 16, svg`<circle cx="8" cy="8" r="7" fill="#e6e6e6" stroke="#d3d3d3"/><path d="M6 4.500v7l5-3.500z" fill="#bdbdbd"/>`)}
          <label for="speed">Speed</label>
          <div class="selwrap"><select id="speed" class="speed"><option>1.000 SPM</option></select>
            <svg width="9" height="6" viewBox="0 0 9 6" fill="none"><path d="M1 1l3.500 3.500L8 1" stroke="#555" stroke-width="1.500" /></svg></div>
        </div>
      </div>
      <footer class="status">
        ${icon(16, 16, svg`<circle cx="7.500" cy="8" r="7.300" fill="#3aa52b" stroke="#1d7514" stroke-width=".8"/><ellipse cx="7.500" cy="4.500" rx="5" ry="3" fill="#7fd070"/><path d="M4 8l3 3 5-6" stroke="#fff" stroke-width="2.200"/>`)}
        <span class="cross">${icon(11, 11, svg`<path d="M5.500 0v11M0 5.500h11" stroke="#5a1a20"/><circle cx="5.500" cy="5.500" r="2" fill="#8a2b35"/>`)}</span>
        <span class="coords">5.195, 1.935 "</span><span>Creating Text</span>
        <span class="spring"></span>
        <div class="zoom">
          <button aria-label="Zoom out">${icon(14, 14, svg`<circle cx="7" cy="7" r="6" fill="#eaf1fb" stroke="#49618f" stroke-width="1.300"/><path d="M4 7h6" stroke="#24396b" stroke-width="2"/>`)}</button>
          <svg class="track" viewBox="0 0 61 12" aria-label="Zoom level"><path d="M0 5.500h61" stroke="#5a78a8" /><path d="M3.500 1.500h8v5l-4 4-4-4z" fill="#eef4fc" stroke="#5a78a8" /><path d="M7.500 3v4M5.500 5h4" stroke="#5a78a8" /></svg>
          <button aria-label="Zoom in">${icon(14, 14, svg`<circle cx="7" cy="7" r="6" fill="#eaf1fb" stroke="#49618f" stroke-width="1.300"/><path d="M4 7h6M7 4v6" stroke="#24396b" stroke-width="2"/>`)}</button>
        </div>
        <span class="pct">77 %</span>
      </footer>`;
  }

  private taskbar() {
    return html`<div class="taskbar">
      <button class="start" aria-label="Start">${icon(16, 17, svg`<path d="M0 2.500L7 1.500V8H0zM8 1.300L16 0v8H8zM0 9h7v6.500L0 14.500zM8 9h8v8l-8-1.300z" fill="#fff"/>`)}</button>
      <label class="search">${icon(17, 18, svg`<circle cx="10.500" cy="6.500" r="5.500" stroke="#333" stroke-width="1.400"/><path d="M6.500 10.500L1 16.500" stroke="#333" stroke-width="1.400"/>`)}<input type="search" placeholder="Type here to search" aria-label="Search" /></label>
      <div class="apps">
        ${taskIcons.map((t) => html`<button class=${classMap({ open: !!t.open, active: !!t.active })} aria-label=${t.name}>${icon(24, 24, t.art)}</button>`)}
      </div>
      <div class="tray">
        <button class="weather">${icon(10, 24, svg`<path d="M5 9V4c0-3 4-3 4 0" stroke="#9a6a58" stroke-width="1.500"/><path d="M5 6c4 5 3 12 0 17-3-5-4-12 0-17z" fill="#4ca3e6"/><path d="M5 8v14" stroke="#b9e0ff"/>`)}Rain to stop</button>
        <button aria-label="Hidden icons">${icon(12, 8, svg`<path d="M1 7l5-5 5 5" stroke="#fff" stroke-width="1.400"/>`)}</button>
        <button aria-label="Microphone">${icon(12, 16, svg`<rect x="3" y="0" width="6" height="11" rx="2" fill="#fff"/><path d="M1 9c0 5 10 5 10 0M4 15.500h4" stroke="#fff" stroke-width="1.200"/>`)}</button>
        <button aria-label="Network">${icon(17, 15, svg`<path d="M5 2.500h11v8H4V6M10 11v3M6 14h8M1 1h4v4H1zM3 5v6" stroke="#fff" stroke-width="1.200"/>`)}</button>
        <button aria-label="Volume">${icon(16, 14, svg`<path d="M1 5h2.500L7 1.500v11L3.500 9H1z" stroke="#fff" stroke-width="1.200"/><path d="M9 5c1 1 1 3 0 4M11 3c2 2 2 6 0 8M13 1.500c3 3 3 8 0 11" stroke="#fff"/>`)}</button>
        <button class="clock"><span>6:13 PM</span><span>8/8/2022</span></button>
        <button class="notes" aria-label="Notifications">${icon(26, 26, svg`<path d="M1 3h16v13H7l-4 4v-4H1z" fill="#fff"/><path d="M3 6.500h12M3 9.500h12M3 12.500h8" stroke="#101010"/><circle cx="16.500" cy="18" r="7.500" fill="#2b2b2b" stroke="#8b8b8b"/><text x="16.500" y="22" font-size="11" class="glyph">1</text>`)}</button>
        <span class="edge"></span>
      </div>
    </div>`;
  }

  render() {
    return html`
      ${this.titleBar()}
      <nav class="menu" aria-label="Ribbon tabs">
        ${ribbonTabs.map((t) => html`<button class="m-${t.toLowerCase()}"><span>${t.toUpperCase()}</span></button>`)}
      </nav>
      ${this.ribbon()}
      ${this.toolbar()}
      <div class="tabs">
        <div class="tab t1"><button>${icons.pen}DF338D7D-0E9E-4C9D-A052-C0813426F6CE (1)</button></div>
        <div class="tab t2"><button>${icons.pen}SWAT SLEEVE</button></div>
        <div class="tab t3"><button>${icons.pen}PATR1004</button></div>
        <div class="tab t4"><button>${icons.pen}Design1</button><button class="closex" aria-label="Close tab">${icon(9, 9, svg`<path d="M1 1l7 7M8 1L1 8" stroke="#111" stroke-width="2"/>`)}</button></div>
        <button class="tnew" aria-label="New tab">${icons.newTab}</button>
      </div>
      ${this.workspace()}
      ${this.bottom()}
      ${this.taskbar()}
    `;
  }
}
